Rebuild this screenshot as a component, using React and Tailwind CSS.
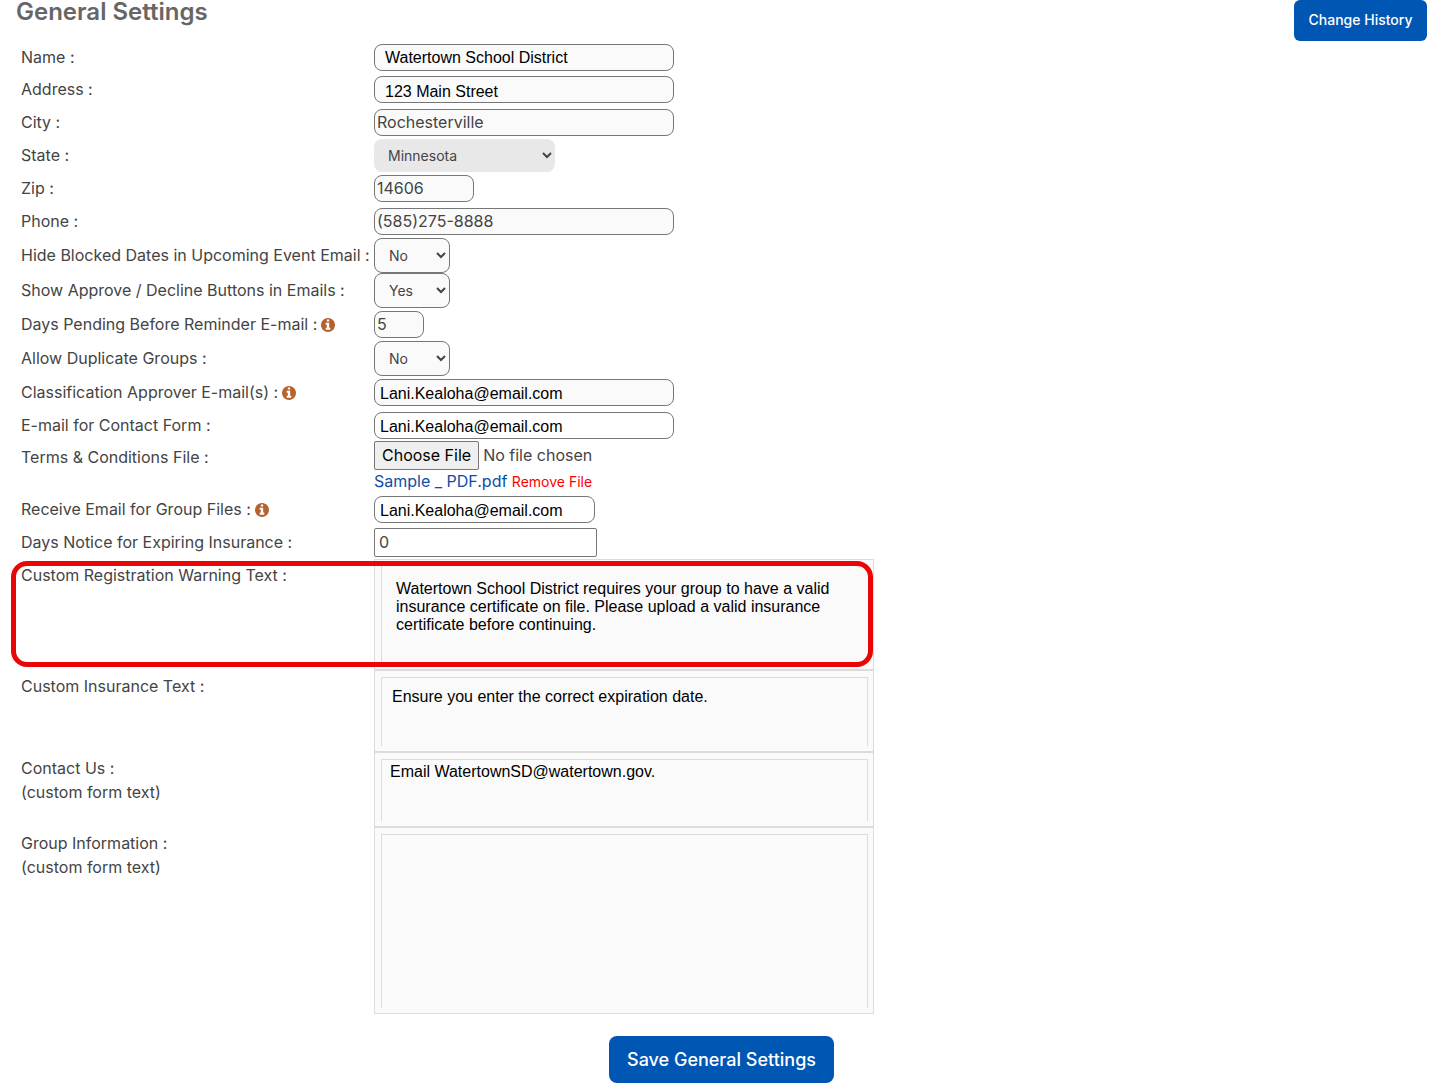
import { clsx } from 'clsx';

const fieldBase = 'block h-[27px] rounded-lg border border-[#767676] text-base outline-none';
const plain = 'bg-[#fafafa] pl-0.5 pb-0.5';
const arial = 'font-["Liberation_Sans",Arial,sans-serif] text-black';

function InfoIcon() {
  return (
    <svg viewBox="0 128 1536 1536" className="mb-0.5 ml-1 inline-block size-3.5 fill-[#b5622d]" aria-hidden="true">
      <path d="M1024 1376v-160q0-14-9-23t-23-9h-96v-512q0-14-9-23t-23-9h-320q-14 0-23 9t-9 23v160q0 14 9 23t23 9h96v320h-96q-14 0-23 9t-9 23v160q0 14 9 23t23 9h448q14 0 23-9t9-23zm-128-896v-160q0-14-9-23t-23-9h-192q-14 0-23 9t-9 23v160q0 14 9 23t23 9h192q14 0 23-9t9-23zm640 416q0 209-103 385.5t-279.5 279.5-385.5 103-385.5-103-279.5-279.5-103-385.5 103-385.5 279.5-279.5 385.5-103 385.5 103 279.5 279.5 103 385.5z" />
    </svg>
  );
}

function Row({ id, label, note, info, className = 'h-[33px]', top = false, children }) {
  return (
    <div className={clsx('flex', top ? 'items-start' : 'items-center', className)}>
      <label htmlFor={id} className={clsx('w-[353px] shrink-0 whitespace-nowrap leading-6', top ? 'pt-1' : 'pb-px')}>
        {label} :
        {info && <InfoIcon />}
        {note && <span className="block">{note}</span>}
      </label>
      {children}
    </div>
  );
}

function TextField({ className, ...props }) {
  return <input type="text" className={clsx(fieldBase, className)} {...props} />;
}

function YesNo({ id, value }) {
  return (
    <select
      id={id}
      defaultValue={value}
      className="h-[35px] w-[76px] rounded-lg border border-[#767676] bg-[#fafafa] pl-2.5 text-sm"
    >
      <option>Yes</option>
      <option>No</option>
    </select>
  );
}

function Editor({ id, value = '', className }) {
  return (
    <div className="h-full w-[500px] border border-[#dcdcdc] bg-[#fafafa] pt-1.5 pr-[5px] pb-[5px] pl-1.5">
      <textarea
        id={id}
        defaultValue={value}
        className={clsx(
          'block h-full w-full resize-none border border-b-0 border-[#dcdcdc] font-["Liberation_Sans",Arial,sans-serif] text-base leading-[18px] text-black outline-none',
          className
        )}
      />
    </div>
  );
}

export default function App() {
  return (
    <main className="min-h-screen bg-white font-[Inter,sans-serif] text-base text-[#444]">
      <header className="flex h-[41px] items-start justify-between pl-4 pr-3.5">
        <h1 className="text-2xl leading-6 font-semibold text-[#666]">General Settings</h1>
        <button type="button" className="h-[41px] w-[133px] rounded-md bg-[#0056b3] pb-0.5 text-sm font-medium text-white">
          Change History
        </button>
      </header>

      <form onSubmit={(e) => e.preventDefault()}>
        <div className="pl-[21px]">
          <Row id="name" label="Name" className="h-8">
            <TextField id="name" defaultValue="Watertown School District" className={clsx('w-[300px] bg-[#fafafa] pt-0.5 pl-2.5', arial)} />
          </Row>
          <Row id="address" label="Address">
            <TextField id="address" defaultValue="123 Main Street" className={clsx('w-[300px] bg-[#fafafa] pt-1 pl-2.5', arial)} />
          </Row>
          <Row id="city" label="City">
            <TextField id="city" defaultValue="Rochesterville" className={clsx('w-[300px]', plain)} />
          </Row>
          <Row id="state" label="State">
            <select id="state" defaultValue="Minnesota" className="h-[33px] w-[181px] rounded-lg bg-[#e8e8e8] pl-2.5 text-sm">
              <option>Minnesota</option>
              <option>New York</option>
            </select>
          </Row>
          <Row id="zip" label="Zip">
            <TextField id="zip" defaultValue="14606" className={clsx('w-[100px]', plain)} />
          </Row>
          <Row id="phone" label="Phone">
            <TextField id="phone" defaultValue="(585)275-8888" className={clsx('w-[300px]', plain)} />
          </Row>
          <Row id="hide-blocked" label="Hide Blocked Dates in Upcoming Event Email" className="h-[35px]">
            <YesNo id="hide-blocked" value="No" />
          </Row>
          <Row id="show-buttons" label="Show Approve / Decline Buttons in Emails" className="h-[35px]">
            <YesNo id="show-buttons" value="Yes" />
          </Row>
          <Row id="days-pending" label="Days Pending Before Reminder E-mail" info>
            <TextField id="days-pending" defaultValue="5" className={clsx('w-[50px]', plain)} />
          </Row>
          <Row id="duplicates" label="Allow Duplicate Groups" className="h-[35px]">
            <YesNo id="duplicates" value="No" />
          </Row>
          <Row id="approver" label="Classification Approver E-mail(s)" info>
            <TextField id="approver" defaultValue="Lani.Kealoha@email.com" className={clsx('w-[300px] bg-[#fafafa] pt-0.5 pl-[5px]', arial)} />
          </Row>
          <Row id="contact-email" label="E-mail for Contact Form" className="h-8">
            <TextField id="contact-email" defaultValue="Lani.Kealoha@email.com" className={clsx('w-[300px] bg-white pt-1 pl-[5px]', arial)} />
          </Row>
          <Row id="terms" label="Terms & Conditions File" top className="h-[52px]">
            <div>
              <input
                id="terms"
                type="file"
                className="block h-[29px] w-[300px] file:h-[29px] file:rounded-xs file:border file:border-solid file:border-[#767676] file:bg-[#efefef] file:px-[7px] file:pb-0.5 file:text-black"
              />
              <div className="leading-[22px]">
                <a href="#sample" className="text-[#0d4ea6]">Sample _ PDF.pdf</a>{' '}
                <a href="#remove" className="text-sm leading-[22px] text-[#f00]">Remove File</a>
              </div>
            </div>
          </Row>
          <Row id="group-files" label="Receive Email for Group Files" info>
            <TextField id="group-files" defaultValue="Lani.Kealoha@email.com" className={clsx('w-[221px] bg-white pt-0.5 pl-[5px]', arial)} />
          </Row>
          <Row id="days-notice" label="Days Notice for Expiring Insurance">
            <input
              id="days-notice"
              type="text"
              defaultValue="0"
              className="h-[29px] w-[223px] rounded-xs border border-[#767676] bg-white pb-0.5 pl-1"
            />
          </Row>
          <div className="relative">
            <Row id="warning-text" label="Custom Registration Warning Text" top className="h-[111px]">
              <Editor
                id="warning-text"
                value="Watertown School District requires your group to have a valid insurance certificate on file. Please upload a valid insurance certificate before continuing."
                className="border-t-0 border-r-0 px-3.5 pt-3.5"
              />
            </Row>
            {/* callout around the warning text setting */}
            <div className="pointer-events-none absolute top-0.5 -left-2.5 h-[106px] w-[862px] rounded-2xl border-5 border-[#ea0606]" />
          </div>
          <Row id="insurance-text" label="Custom Insurance Text" top className="h-[82px]">
            <Editor id="insurance-text" value="Ensure you enter the correct expiration date." className="px-2.5 pt-2.5" />
          </Row>
          <Row id="contact-us" label="Contact Us" note="(custom form text)" top className="h-[75px]">
            <Editor id="contact-us" value="Email WatertownSD@watertown.gov." className="px-2 pt-[3px]" />
          </Row>
          <Row id="group-info" label="Group Information" note="(custom form text)" top className="h-[187px]">
            <Editor id="group-info" />
          </Row>
        </div>

        <div className="flex justify-center pt-[22px] pl-0.5">
          <button type="submit" className="h-[47px] w-[225px] rounded-lg bg-[#0056b3] text-lg font-medium text-white">
            Save General Settings
          </button>
        </div>
      </form>
    </main>
  );
}
